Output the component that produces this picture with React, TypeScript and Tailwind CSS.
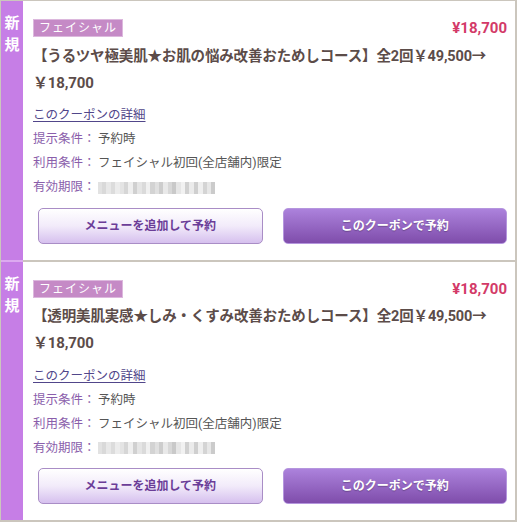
const coupons = [
  {
    id: 1,
    title: '【うるツヤ極美肌★お肌の悩み改善おためしコース】全2回￥49,500→',
    price: '￥18,700',
  },
  {
    id: 2,
    title: '【透明美肌実感★しみ・くすみ改善おためしコース】全2回￥49,500→',
    price: '￥18,700',
  },
];

// pixelated blur of the expiry date
const blur = [
  ['w-[4px]', 'bg-[#e2e2e2]'],
  ['w-[4px]', 'bg-[#d9d9d9]'],
  ['w-[5px]', 'bg-[#e8e8e8]'],
  ['w-[4px]', 'bg-[#dcdcdc]'],
  ['w-[5px]', 'bg-[#ececec]'],
  ['w-[4px]', 'bg-[#e4e4e4]'],
  ['w-[4px]', 'bg-[#d6d6d6]'],
  ['w-[5px]', 'bg-[#efefef]'],
  ['w-[4px]', 'bg-[#d0d0d0]'],
  ['w-[5px]', 'bg-[#e5e5e5]'],
  ['w-[4px]', 'bg-[#dadada]'],
  ['w-[4px]', 'bg-[#f0f0f0]'],
  ['w-[5px]', 'bg-[#d3d3d3]'],
  ['w-[4px]', 'bg-[#e0e0e0]'],
  ['w-[4px]', 'bg-[#cdcdcd]'],
  ['w-[5px]', 'bg-[#e9e9e9]'],
  ['w-[4px]', 'bg-[#d8d8d8]'],
  ['w-[4px]', 'bg-[#c9c9c9]'],
  ['w-[5px]', 'bg-[#e6e6e6]'],
  ['w-[4px]', 'bg-[#f2f2f2]'],
  ['w-[4px]', 'bg-[#d1d1d1]'],
  ['w-[5px]', 'bg-[#ebebeb]'],
  ['w-[4px]', 'bg-[#cfcfcf]'],
  ['w-[5px]', 'bg-[#efefef]'],
  ['w-[4px]', 'bg-[#d4d4d4]'],
  ['w-[4px]', 'bg-[#e7e7e7]'],
  ['w-[4px]', 'bg-[#cbcbcb]'],
];

function Row({ label, children }: { label: string; children: React.ReactNode }) {
  return (
    <div className="flex items-center h-[24px] text-[12.5px]">
      <span className="text-[#8a5eab] w-[65px] shrink-0">{label}</span>
      {children}
    </div>
  );
}

function Coupon({ title, price, last }: { title: string; price: string; last: boolean }) {
  return (
    <div className="flex">
      <div
        className={`w-[22px] shrink-0 bg-[#c67ee6] border-b-2 ${
          last ? 'border-[#cbc6bd]' : 'border-[#dcaaf0]'
        } pt-[11px] flex flex-col items-center text-white font-bold text-[15px] leading-[22px]`}
      >
        <span>新</span>
        <span>規</span>
      </div>
      <div className="flex-1 bg-white border-b-2 border-[#cbc6bd] pl-[10px] pr-[8px] pt-[16px] pb-[16px]">
        <div className="flex items-center justify-between">
          <span className="h-[18px] w-[90px] flex items-center justify-center bg-[#c58ac6] border border-[#dcb8dd] text-white text-[12px] tracking-[1px]">
            フェイシャル
          </span>
          <span className="text-[#d33a68] font-bold text-[15px]">¥18,700</span>
        </div>
        <div className="mt-[4px] text-[14.5px] leading-[26px] tracking-[-0.15px] font-bold text-[#5c4c49]">
          {title}
          <wbr />
          <span className="text-[15px]">{price}</span>
        </div>
        <div className="mt-[9px] h-[20px] flex items-center">
          <a href="#" className="text-[12.5px] text-[#51468a] underline underline-offset-2">
            このクーポンの詳細
          </a>
        </div>
        <div className="mt-[2px]">
          <Row label="提示条件：">
            <span className="text-[#555]">予約時</span>
          </Row>
          <Row label="利用条件：">
            <span className="text-[#555]">フェイシャル初回(全店舗内)限定</span>
          </Row>
          <Row label="有効期限：">
            <div className="flex h-[12px]">
              {blur.map(([w, bg], i) => (
                <div key={i} className={`${w} ${bg} h-full`} />
              ))}
            </div>
          </Row>
        </div>
        <div className="mt-[8px] ml-[5px] grid grid-cols-2 gap-[20px]">
          <button className="h-[36px] rounded-[5px] border border-[#a98dc6] bg-gradient-to-b from-white via-[#f2ebfa] to-[#d6c0ee] text-[#6b3d98] font-bold text-[12px]">
            メニューを追加して予約
          </button>
          <button className="h-[36px] rounded-[5px] border border-[#b596de] bg-gradient-to-b from-[#ac82dc] to-[#7f4dab] text-white font-bold text-[12px] [text-shadow:0_1px_1px_rgba(0,0,0,0.25)]">
            このクーポンで予約
          </button>
        </div>
      </div>
    </div>
  );
}

export default function App() {
  return (
    <div className="w-[518px] h-[524px] bg-white font-['Roboto','Noto_Sans_CJK_JP',sans-serif]">
      <div className="w-[517px] border-t border-l border-r-2 border-[#cbc6bd]">
        {coupons.map((c, i) => (
          <Coupon
            key={c.id}
            title={c.title}
            price={c.price}
            last={i === coupons.length - 1}
          />
        ))}
      </div>
    </div>
  );
}
